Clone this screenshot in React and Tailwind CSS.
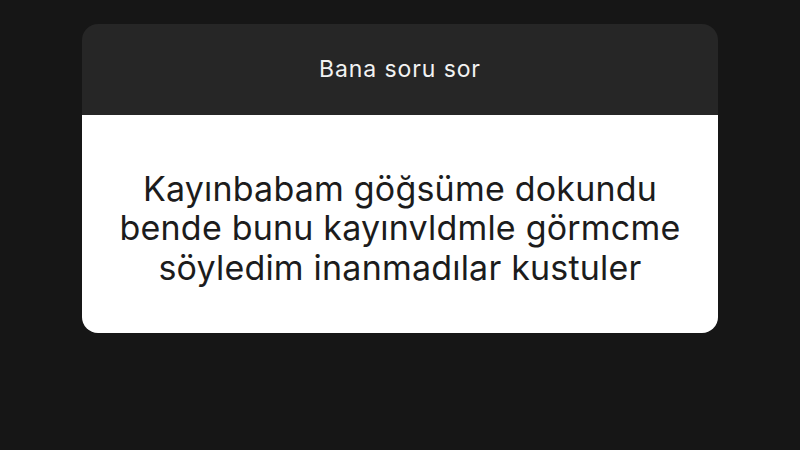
import React from 'react';

function App() {
  return (
    <div className="w-[800px] h-[450px] bg-[#161616] pt-[24px] pl-[82px]" style={{ fontFamily: 'Inter, "Noto Sans", sans-serif' }}>
      <div className="w-[636px] rounded-[16px] overflow-hidden">
        <div className="h-[91px] bg-[#262626] flex items-center justify-center">
          <span className="text-[23px] text-[#f2f2f2] tracking-[0.9px]">Bana soru sor</span>
        </div>
        <div className="h-[218px] bg-white flex items-center justify-center pt-[8px]">
          <p className="text-center text-[34px] leading-[39.5px] text-[#1c1c1c] tracking-[0.2px]">
            Kayınbabam göğsüme dokundu<br />
            bende bunu kayınvldmle görmcme<br />
            söyledim inanmadılar kustuler
          </p>
        </div>
      </div>
    </div>
  );
}

export default App;
